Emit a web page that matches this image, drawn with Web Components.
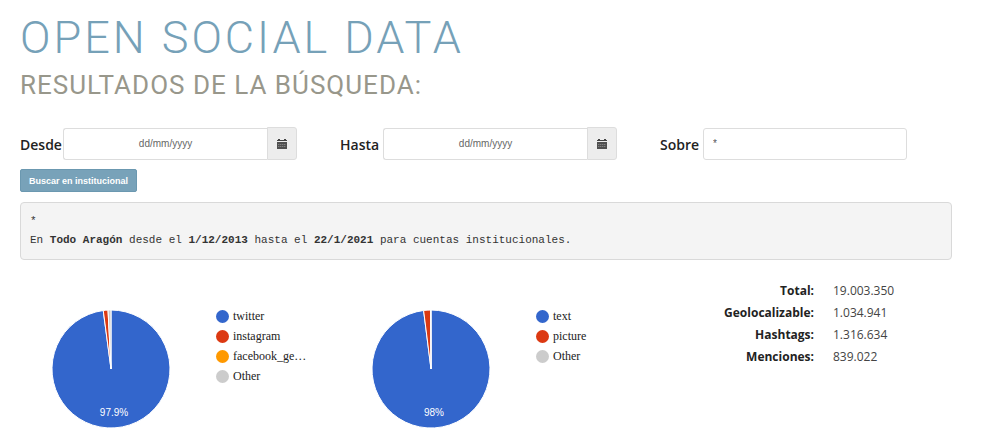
<!DOCTYPE html>
<html lang="es">
<head>
<meta charset="utf-8">
<title>Open Social Data</title>
<style>
body { margin: 0; background: #fff; color: #333; font-family: "Open Sans", sans-serif; }
</style>
</head>
<body>
<social-page></social-page>

<template id="t-page">
  <style>
    :host { display: block; padding: 12px 48px 18px 20px; }
    h1, h2 { margin: 0; font-family: Roboto, sans-serif; text-transform: uppercase; }
    h1 { font-size: 45px; line-height: 52px; font-weight: 300; letter-spacing: 3px; color: #76a1b8; }
    h2 { margin-top: 5px; font-size: 26px; line-height: 32px; font-weight: 400; letter-spacing: 1px; color: #98978b; }
    .row { display: grid; grid-template-columns: repeat(3, 1fr); column-gap: 28px; }
    form { margin-top: 26px; }
    button { display: block; margin-top: 9px; height: 23px; padding: 0 8px; border: 1px solid #6b98b0; border-radius: 2px; background: #78a2b9; color: #fff; font: bold 9px/20px "Liberation Sans", sans-serif; }
    pre { margin: 10px 0 0; padding: 9px; border: 1px solid #d9d9d9; border-radius: 4px; background: #f4f4f4; white-space: pre-wrap; font: 11px/19px "Liberation Mono", monospace; }
    .results { margin-top: 20px; }
  </style>
  <h1>Open Social Data</h1>
  <h2>Resultados de la búsqueda:</h2>
  <form>
    <div class="row">
      <search-field label="Desde" kind="date"></search-field>
      <search-field label="Hasta" kind="date"></search-field>
      <search-field label="Sobre" value="*"></search-field>
    </div>
    <button type="button">Buscar en institucional</button>
  </form>
  <pre>*
En <b>Todo Aragón</b> desde el <b>1/12/2013</b> hasta el <b>22/1/2021</b> para cuentas institucionales.</pre>
  <div class="row results">
    <pie-chart label="97.9%" slices="97.9,1.3,0,0.8">
      <legend-item color="#3366cc">twitter</legend-item>
      <legend-item color="#dc3912">instagram</legend-item>
      <legend-item color="#ff9900">facebook_ge…</legend-item>
      <legend-item color="#cccccc">Other</legend-item>
    </pie-chart>
    <pie-chart label="98%" slices="98,1.9,0.1">
      <legend-item color="#3366cc">text</legend-item>
      <legend-item color="#dc3912">picture</legend-item>
      <legend-item color="#cccccc">Other</legend-item>
    </pie-chart>
    <totals-table></totals-table>
  </div>
</template>

<template id="t-field">
  <style>
    :host { display: grid; grid-template-columns: 43px 1fr 30px; align-items: center; margin-right: 15px; height: 33px; }
    label { font-size: 14px; line-height: 20px; font-weight: 600; color: #222; padding-top: 2px; }
    input { box-sizing: border-box; width: 100%; min-width: 0; height: 32px; margin: 0; padding: 0 9px; border: 1px solid #ddd; border-radius: 3px; background: #fff; color: #555; font: 10px/16px "Liberation Sans", sans-serif; outline: 0; }
    input::placeholder { color: #666; opacity: 1; }
    :host([kind="date"]) input { text-align: center; border-radius: 3px 0 0 3px; border-right: 0; }
    button { box-sizing: border-box; height: 33px; padding: 0; border: 1px solid #ddd; border-radius: 0 3px 3px 0; background: #ededed; display: grid; place-items: center; }
    svg { display: block; }
    :host(:not([kind="date"])) button { display: none; }
  </style>
  <label for="f"></label>
  <input id="f" type="text">
  <button type="button" aria-label="Abrir calendario">
    <svg width="10" height="10" viewBox="0 0 10 10"><path d="M0 1h1V0h2v1h4V0h2v1h1v1H0z" fill="#444"/><path d="M0 3h10v7H0z" fill="#505050"/><path d="M1 5.5h8M1 7.5h8" stroke="#999" stroke-width=".7" stroke-dasharray="1.4 .6"/></svg>
  </button>
</template>

<template id="t-pie">
  <style>
    :host { display: flex; align-items: flex-start; padding: 29px 0 0 31px; }
    svg { flex: none; display: block; }
    ul { list-style: none; margin: -3px 0 0 45px; padding: 0; }
    text { font: 10px "Liberation Sans", sans-serif; fill: #fff; text-anchor: middle; }
  </style>
  <svg width="120" height="120" viewBox="-60 -60 120 120"><g></g><text x="3" y="47"></text></svg>
  <ul><slot></slot></ul>
</template>

<template id="t-legend">
  <style>
    :host { display: list-item; list-style: none; }
    div { display: flex; align-items: center; gap: 4px; height: 20px; font: 12px/16px "Liberation Serif", serif; color: #222; }
    i { width: 13px; height: 13px; border-radius: 50%; }
  </style>
  <div><i></i><span><slot></slot></span></div>
</template>

<template id="t-totals">
  <style>
    :host { display: block; }
    table { border-collapse: collapse; font-size: 12px; line-height: 22px; color: #444; }
    th, td { padding: 0; }
    th { width: 154px; text-align: right; font-weight: 700; color: #222; }
    td { padding-left: 19px; }
  </style>
  <table>
    <tr><th scope="row">Total:</th><td>19.003.350</td></tr>
    <tr><th scope="row">Geolocalizable:</th><td>1.034.941</td></tr>
    <tr><th scope="row">Hashtags:</th><td>1.316.634</td></tr>
    <tr><th scope="row">Menciones:</th><td>839.022</td></tr>
  </table>
</template>

<script>
class Base extends HTMLElement {
  constructor() {
    super();
    const t = document.getElementById(this.constructor.template);
    this.attachShadow({ mode: "open" }).append(t.content.cloneNode(true));
  }
  $(s) { return this.shadowRoot.querySelector(s); }
}
class SocialPage extends Base { static template = "t-page"; }
class TotalsTable extends Base { static template = "t-totals"; }
class LegendItem extends Base {
  static template = "t-legend";
  connectedCallback() { this.$("i").style.background = this.getAttribute("color"); }
}
class SearchField extends Base {
  static template = "t-field";
  connectedCallback() {
    this.$("label").textContent = this.getAttribute("label");
    const input = this.$("input");
    if (this.getAttribute("kind") === "date") input.placeholder = "dd/mm/yyyy";
    input.value = this.getAttribute("value") || "";
  }
}
class PieChart extends Base {
  static template = "t-pie";
  connectedCallback() {
    const colors = [...this.children].map(c => c.getAttribute("color"));
    const at = p => {
      const a = p / 100 * 2 * Math.PI;
      return `${59 * Math.sin(a)} ${-59 * Math.cos(a)}`;
    };
    let sum = 0;
    this.getAttribute("slices").split(",").map(Number).forEach((v, i) => {
      if (!v) return;
      const path = document.createElementNS("http://www.w3.org/2000/svg", "path");
      path.setAttribute("d", `M0 0L${at(sum)}A59 59 0 ${v > 50 ? 1 : 0} 1 ${at(sum + v)}Z`);
      path.setAttribute("fill", colors[i]);
      path.setAttribute("stroke", "#fff");
      this.$("g").append(path);
      sum += v;
    });
    this.$("text").textContent = this.getAttribute("label");
  }
}
customElements.define("legend-item", LegendItem);
customElements.define("pie-chart", PieChart);
customElements.define("search-field", SearchField);
customElements.define("totals-table", TotalsTable);
customElements.define("social-page", SocialPage);
</script>
</body>
</html>
